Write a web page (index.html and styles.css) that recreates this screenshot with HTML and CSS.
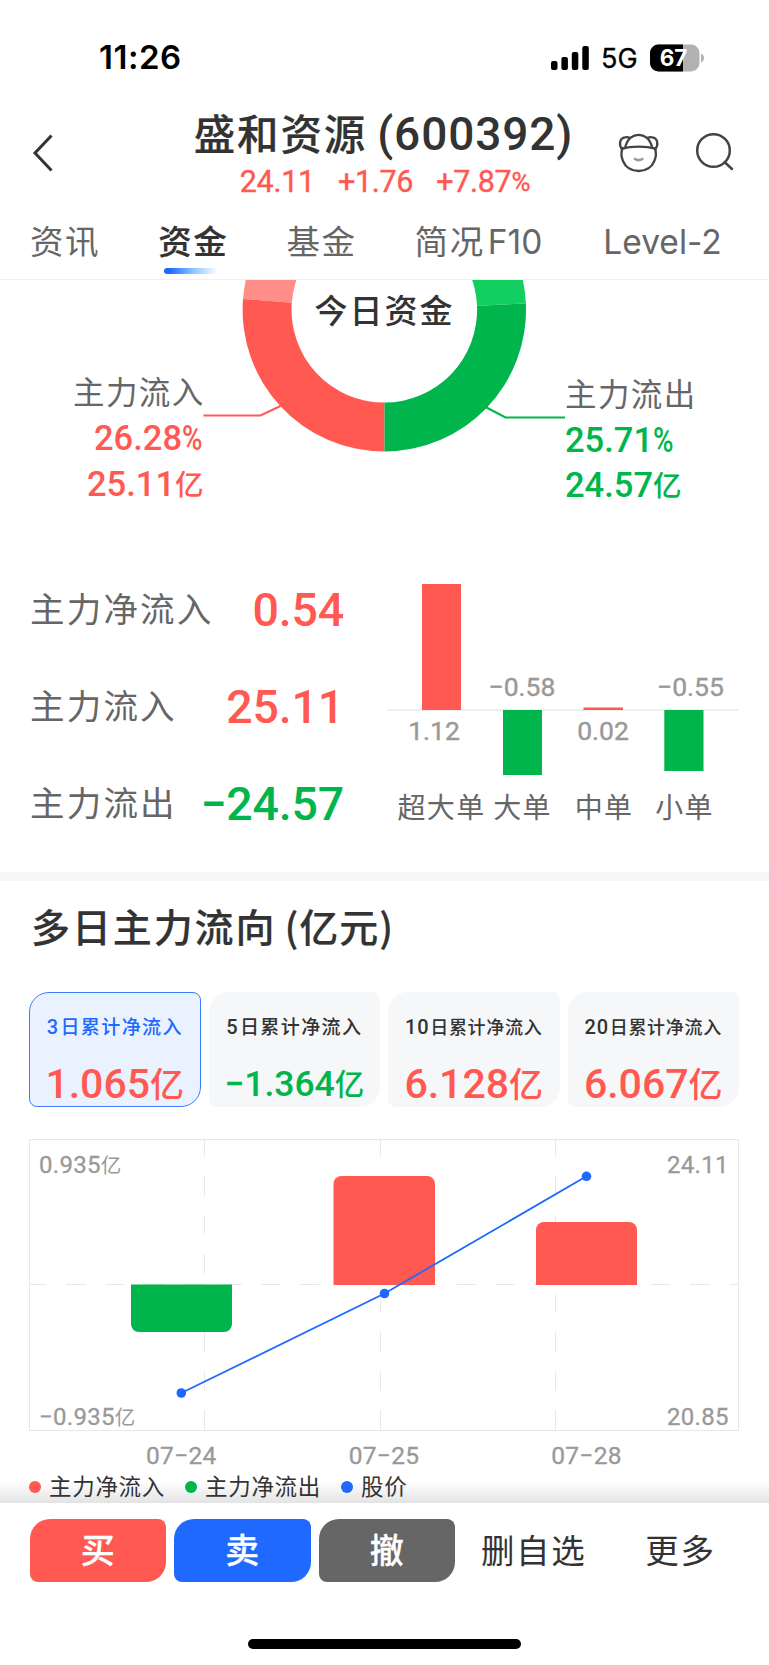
FILE: index.html
```html
<!DOCTYPE html>
<html lang="zh-CN">

<head>
    <meta charset="UTF-8">
    <meta name="viewport" content="width=device-width, initial-scale=1.0">
    <title>盛和资源 (600392)</title>
    <link rel="stylesheet" href="styles.css">
</head>

<body>

    <div class="phone">
        <!-- Status bar -->
        <div class="status-bar">
            <span class="time">11:26</span>
            <div class="status-right">
                <svg class="signal" width="38" height="24" viewBox="0 0 38 24">
                    <rect x="0" y="15" width="6.5" height="9" rx="2" />
                    <rect x="10.4" y="11" width="6.5" height="13" rx="2" />
                    <rect x="20.8" y="6" width="6.5" height="18" rx="2" />
                    <rect x="31.3" y="0" width="6.5" height="24" rx="2" />
                </svg>
                <span class="network">5G</span>
                <svg class="battery" width="54" height="28" viewBox="0 0 54 28">
                    <defs>
                        <clipPath id="cell"><rect x="0" y="0.5" width="49.5" height="27" rx="8.5" /></clipPath>
                    </defs>
                    <g clip-path="url(#cell)">
                        <rect width="50" height="28" fill="#b2b2b2" />
                        <rect width="33" height="28" fill="#000" />
                    </g>
                    <path d="M51 9.5c4 1.5 4 7.5 0 9z" fill="#b2b2b2" />
                    <text x="23.5" y="22" text-anchor="middle">67</text>
                </svg>
            </div>
        </div>

        <!-- Stock header -->
        <header class="header">
            <svg class="back" width="22" height="40" viewBox="0 0 22 40">
                <path d="M19.5 2.5 3 20l16.5 17.5" />
            </svg>
            <div class="stock">
                <h1>盛和资源<span class="code">(600392)</span></h1>
                <p class="quote"><span>24.11</span><span>+1.76</span><span>+7.87<small>%</small></span></p>
            </div>
            <div class="actions">
                <svg width="42" height="42" viewBox="700 336 126 126">
                    <path d="M713 384c-3 10-3 28 2 39 7 18 25 30 47 30s40-12 47-30c5-11 5-29 2-39" />
                    <path d="M711 386c30-8 72-8 102 0" />
                    <path d="M721 384c3-13 9-24 17-31 14-11 34-11 48 0 8 7 14 18 17 31" />
                    <path d="M713 388c-12-13-8-34 8-36 6-1 11 0 15 2" />
                    <path d="M811 388c12-13 8-34-8-36-6-1-11 0-15 2" />
                    <path class="smile" d="M751 417c6 4 16 4 22 0" />
                </svg>
                <svg width="40" height="40" viewBox="0 0 40 40">
                    <circle class="thin" cx="18.5" cy="18.5" r="16.3" />
                    <path class="thin" d="M29.5 30l7.5 7" />
                </svg>
            </div>
        </header>

        <nav class="tabs">
            <a>资讯</a>
            <a class="active">资金</a>
            <a>基金</a>
            <a>简况<span class="latin">F10</span></a>
            <a><span class="latin">Level-2</span></a>
        </nav>

        <main>
            <!-- Today's money flow ring -->
            <svg class="ring" width="769" height="242" viewBox="0 280 769 242">
                <path class="red-light" d="M243 299A141.7 141.7 0 0 1 384.3 168.1V217A92.8 92.8 0 0 0 291.8 302.7Z" />
                <path class="red" d="M384.5 451.5A141.7 141.7 0 0 1 243 299L291.8 302.7A92.8 92.8 0 0 0 384.5 402.6Z" />
                <path class="green-light" d="M525.9 303.5A141.7 141.7 0 0 0 384.3 168.1V217A92.8 92.8 0 0 1 477 305.7Z" />
                <path class="green" d="M384.5 451.5A141.7 141.7 0 0 0 525.9 303.5L477 305.7A92.8 92.8 0 0 1 384.5 402.6Z" />
                <text class="ring-title" x="314.5" y="323">今日资金</text>

                <path class="lead lead-in" d="M203.5 415.5h57l20-9.5" />
                <text class="ring-label" x="73" y="404">主力流入</text>
                <text class="ring-num in" x="94" y="450">26.28<tspan class="percent" textLength="20.5" lengthAdjust="spacingAndGlyphs">%</tspan></text>
                <text class="ring-num in" x="87" y="496">25.11<tspan class="yi" dy="-1">亿</tspan></text>

                <path class="lead lead-out" d="M565 417.5h-59.5l-19-10" />
                <text class="ring-label" x="565" y="406">主力流出</text>
                <text class="ring-num out" x="565" y="451.5">25.71<tspan class="percent" textLength="20.5" lengthAdjust="spacingAndGlyphs">%</tspan></text>
                <text class="ring-num out" x="565" y="497">24.57<tspan class="yi" dy="-1">亿</tspan></text>
            </svg>

            <section class="summary">
                <ul class="totals">
                    <li><span>主力净流入</span><b class="in">0.54</b></li>
                    <li><span>主力流入</span><b class="in">25.11</b></li>
                    <li><span>主力流出</span><b class="out">−24.57</b></li>
                </ul>
                <svg class="orders" width="382" height="310" viewBox="387 562 382 310">
                    <path d="M387 710h351.5" stroke="#eee" stroke-width="2" />
                    <rect class="red" x="422" y="584" width="39" height="126" />
                    <rect class="green" x="503" y="710" width="39" height="65" />
                    <rect class="red" x="583.5" y="707.5" width="39.5" height="2.5" />
                    <rect class="green" x="664.3" y="710" width="39.2" height="61" />
                    <text class="order-num" x="434" y="740">1.12</text>
                    <text class="order-num" x="522" y="696">−0.58</text>
                    <text class="order-num" x="603" y="740">0.02</text>
                    <text class="order-num" x="690.5" y="696">−0.55</text>
                    <text class="order-name" x="441.5" y="818">超大单</text>
                    <text class="order-name" x="522.5" y="818">大单</text>
                    <text class="order-name" x="604" y="818">中单</text>
                    <text class="order-name" x="684.5" y="818">小单</text>
                </svg>
            </section>

            <!-- Multi-day flow -->
            <section class="multi-day">
                <h2>多日主力流向<span class="unit">(亿元)</span></h2>
                <div class="cards">
                    <div class="card selected">
                        <p><i>3</i>日累计净流入</p>
                        <strong class="in">1.065<em>亿</em></strong>
                    </div>
                    <div class="card">
                        <p><i>5</i>日累计净流入</p>
                        <strong class="out small">−1.364<em>亿</em></strong>
                    </div>
                    <div class="card tight">
                        <p><i>10</i>日累计净流入</p>
                        <strong class="in">6.128<em>亿</em></strong>
                    </div>
                    <div class="card tight">
                        <p><i>20</i>日累计净流入</p>
                        <strong class="in">6.067<em>亿</em></strong>
                    </div>
                </div>

                <svg class="flow" width="769" height="342" viewBox="0 1130 769 342">
                    <path class="grid" d="M204.5 1139.5v291M380.5 1139.5v291M555.5 1139.5v291M29.5 1284.5h709" />
                    <rect class="frame" x="29.5" y="1139.5" width="709" height="291" />
                    <path class="green" d="M131 1284.5h101V1324a8 8 0 0 1-8 8h-85a8 8 0 0 1-8-8z" />
                    <path class="red" d="M333.5 1285v-101a8 8 0 0 1 8-8h85.5a8 8 0 0 1 8 8v101z" />
                    <path class="red" d="M536 1285v-55a8 8 0 0 1 8-8h85a8 8 0 0 1 8 8v55z" />
                    <polyline class="price" points="181.3,1393 384.5,1293.5 586.5,1176.3" />
                    <circle class="dot" cx="181.3" cy="1393" r="4.8" />
                    <circle class="dot" cx="384.5" cy="1293.5" r="4.8" />
                    <circle class="dot" cx="586.5" cy="1176.3" r="4.8" />
                    <text class="axis" x="39" y="1172.5">0.935<tspan class="yi">亿</tspan></text>
                    <text class="axis" x="39" y="1424.5">−0.935<tspan class="yi">亿</tspan></text>
                    <text class="axis" x="667" y="1172.5">24.11</text>
                    <text class="axis" x="667" y="1424.5">20.85</text>
                    <text class="date" x="181.3" y="1464">07−24</text>
                    <text class="date" x="384" y="1464">07−25</text>
                    <text class="date" x="586.5" y="1464">07−28</text>
                </svg>

                <div class="legend">
                    <span class="key key-in">主力净流入</span>
                    <span class="key key-out">主力净流出</span>
                    <span class="key key-price">股价</span>
                </div>
            </section>
        </main>

        <footer class="toolbar">
            <button class="buy">买</button>
            <button class="sell">卖</button>
            <button class="cancel">撤</button>
            <a class="remove">删自选</a>
            <a class="more">更多</a>
        </footer>
        <div class="home-indicator"></div>
    </div>

</body>

</html>
```
FILE: styles.css
```css
* {
    box-sizing: border-box;
    margin: 0;
    padding: 0;
}

body {
    font-family: "Noto Sans CJK SC", sans-serif;
    background-color: #ffffff;
    color: #333333;
}

.phone {
    width: 769px;
    height: 1665px;
    display: flex;
    flex-direction: column;
    overflow: hidden;
}

svg {
    display: block;
    flex: none;
}

.in {
    color: #ff5952;
    fill: #ff5952;
}

.out {
    color: #00b54b;
    fill: #00b54b;
}

.red {
    fill: #ff5952;
}

.red-light {
    fill: #ff8e88;
}

.green {
    fill: #00b54b;
}

.green-light {
    fill: #13cf61;
}

/* Status bar */
.status-bar {
    height: 102px;
    padding: 36px 65px 0 99px;
    display: flex;
    justify-content: space-between;
    align-items: flex-start;
    color: #000000;
    font-family: Inter, sans-serif;
}

.time {
    font-size: 33px;
    line-height: 43px;
    font-weight: 600;
    letter-spacing: 0.5px;
}

.status-right {
    display: flex;
    align-items: center;
    height: 43px;
}

.network {
    font-size: 27px;
    line-height: 43px;
    font-weight: 400;
    -webkit-text-stroke: 0.3px #000000;
    margin: 1px 0 0 12px;
    width: 49px;
}

.battery text {
    font-size: 22.5px;
    font-weight: 700;
    fill: #ffffff;
}

/* Header */
.header {
    height: 104px;
    display: grid;
    grid-template-columns: 170px 1fr 170px;
}

.back {
    margin: 31px 0 0 32px;
    fill: none;
    stroke: #333333;
    stroke-width: 3;
}

.stock {
    text-align: center;
    white-space: nowrap;
}

h1 {
    font-size: 41.5px;
    line-height: 60px;
    font-weight: 500;
    letter-spacing: 1.9px;
    margin-left: -2px;
    -webkit-text-stroke: 0.2px #333333;
}

.code {
    font-family: Roboto, sans-serif;
    font-size: 46px;
    letter-spacing: 0.9px;
    margin-left: 10px;
    -webkit-text-stroke: 0;
}

.quote {
    display: flex;
    justify-content: center;
    gap: 23px;
    margin-left: 1px;
    font-family: Roboto, sans-serif;
    font-size: 30.5px;
    line-height: 36px;
    letter-spacing: -0.3px;
    color: #ff5952;
    -webkit-text-stroke: 0.4px #ff5952;
}

.quote small {
    font-size: 26px;
    vertical-align: 1px;
    line-height: 1;
}

.actions {
    display: flex;
    align-items: flex-start;
    padding: 30px 0 0 19px;
    gap: 35px;
}

.actions path,
.actions circle {
    fill: none;
    stroke: #444444;
    stroke-width: 7;
    stroke-linecap: round;
}

.actions .thin {
    stroke-width: 2.5;
}

.actions .smile {
    stroke: #999999;
    stroke-width: 8;
}

/* Tabs */
.tabs {
    height: 74px;
    display: flex;
    padding: 10px 0 0 30px;
    border-bottom: 1px solid #f0f0f0;
    font-size: 33.5px;
    line-height: 47px;
    letter-spacing: 1.6px;
    color: #666666;
    white-space: nowrap;
}

.tabs a {
    margin-right: 58px;
}

.tabs .active {
    color: #333333;
    font-weight: 500;
    -webkit-text-stroke: 0.2px #333333;
}

.tabs .active::after {
    content: "";
    display: block;
    width: 54px;
    height: 6px;
    margin: 5px 0 0 6px;
    border-radius: 3px;
    background: linear-gradient(90deg, #1f69ff 10%, #8cc8ff 55%, #ffffff);
}

.latin {
    font-family: Inter, sans-serif;
    font-size: 33.5px;
    letter-spacing: 0;
    margin-left: 3px;
}

/* Ring chart */
.ring-title {
    font-size: 33px;
    font-weight: 500;
    letter-spacing: 2px;
    fill: #333333;
}

.ring-label {
    font-size: 31.5px;
    letter-spacing: 1.4px;
    fill: #666666;
}

.ring-num {
    font-family: Roboto, sans-serif;
    font-size: 34.5px;
    font-weight: 500;
}

.ring-num .yi {
    font-family: "Noto Sans CJK SC", sans-serif;
    font-size: 28.5px;
}

.lead {
    fill: none;
    stroke-width: 2;
}

.lead-in {
    stroke: #ff5952;
}

.lead-out {
    stroke: #00b54b;
}

/* Totals and order sizes */
.summary {
    height: 359px;
    padding-top: 40px;
    border-bottom: 9px solid #f6f7f9;
    display: flex;
    justify-content: space-between;
}

.totals {
    width: 344px;
    padding-left: 30px;
    list-style: none;
}

.totals li {
    display: flex;
    justify-content: space-between;
    height: 97px;
    line-height: 97px;
    font-size: 34.5px;
    letter-spacing: 2.2px;
    color: #666666;
    white-space: nowrap;
}

.totals span {
    line-height: 91px;
}

.totals b {
    font-family: Roboto, sans-serif;
    font-size: 46.5px;
    font-weight: 500;
    letter-spacing: -0.2px;
}

.order-num {
    font-family: Roboto, sans-serif;
    font-size: 26.5px;
    text-anchor: middle;
    fill: #999999;
    stroke: #999999;
    stroke-width: 0.4;
}

.order-name {
    font-size: 28px;
    letter-spacing: 1.3px;
    text-anchor: middle;
    fill: #666666;
}

/* Multi-day section */
h2 {
    padding: 14px 0 0 31px;
    font-size: 39px;
    line-height: 60px;
    font-weight: 500;
    letter-spacing: 1.9px;
    -webkit-text-stroke: 0.2px #333333;
}

.unit {
    margin-left: 8px;
    letter-spacing: 1px;
}

.cards {
    display: grid;
    grid-template-columns: repeat(4, 1fr);
    gap: 8px;
    padding: 0 30px 0 29px;
    margin-top: 37px;
}

.card {
    height: 115px;
    background: #f6f7f9;
    border: 1px solid #f6f7f9;
    border-radius: 20px 8px 20px 8px;
    text-align: center;
    white-space: nowrap;
    padding-top: 18px;
}

.card.selected {
    background: #ebf2ff;
    border-color: #3d7dff;
}

.card p {
    font-size: 19px;
    line-height: 30px;
    font-weight: 500;
    letter-spacing: 1.4px;
}

.card.tight p {
    font-size: 18px;
    letter-spacing: 0.7px;
}

.card.selected p {
    color: #1f69ff;
}

.card i {
    font-family: Roboto, sans-serif;
    font-style: normal;
    font-size: 20px;
    margin-right: 1px;
}

.card strong {
    display: block;
    margin-top: 17px;
    font-family: Roboto, sans-serif;
    font-size: 41px;
    line-height: 50px;
    font-weight: 500;
}

.card strong.small {
    font-size: 35.5px;
}

.card em {
    font-family: "Noto Sans CJK SC", sans-serif;
    font-style: normal;
    font-size: 0.83em;
    line-height: 1;
    vertical-align: 1px;
}

.flow {
    margin-top: 23px;
}

.grid,
.frame {
    fill: none;
    stroke: #e8e8e8;
    stroke-width: 1;
}

.grid {
    stroke-dasharray: 19.5 19.5;
    stroke-dashoffset: 2.3;
}

.price {
    fill: none;
    stroke: #1f69ff;
    stroke-width: 1.8;
}

.dot {
    fill: #1f69ff;
}

.axis,
.date {
    font-family: Roboto, sans-serif;
    font-size: 24px;
    letter-spacing: 0.3px;
    fill: #999999;
    stroke: #999999;
    stroke-width: 0.3;
}

.axis .yi {
    font-family: "Noto Sans CJK SC", sans-serif;
    font-size: 20.5px;
    stroke: none;
}

.date {
    font-size: 24.5px;
    text-anchor: middle;
}

.legend {
    height: 31px;
    display: flex;
    align-items: flex-start;
    padding-left: 29px;
    background: linear-gradient(#ffffff 30%, #e3e3e3);
    font-size: 22.5px;
    line-height: 27px;
    letter-spacing: 0.7px;
    white-space: nowrap;
}

.key {
    display: flex;
    align-items: center;
    margin-right: 20px;
}

.key::before {
    content: "";
    width: 12px;
    height: 12px;
    margin: 2px 8px 0 0;
    border-radius: 50%;
}

.key-in::before {
    background: #ff5952;
}

.key-out::before {
    background: #00b54b;
}

.key-price::before {
    background: #1f69ff;
}

/* Bottom toolbar */
.toolbar {
    display: flex;
    align-items: center;
    gap: 8px;
    height: 95px;
    padding-left: 29.5px;
    font-size: 33.5px;
    line-height: 60px;
    letter-spacing: 1.6px;
    white-space: nowrap;
}

.toolbar a {
    padding-bottom: 3px;
}

.toolbar button {
    width: 136.5px;
    height: 63px;
    border: none;
    border-radius: 20px 8px 20px 8px;
    color: #ffffff;
    font-family: inherit;
    font-size: 34px;
    font-weight: 500;
    line-height: 58px;
    padding-bottom: 3px;
    -webkit-text-stroke: 0.3px #ffffff;
}

.buy {
    background: #ff5952;
}

.sell {
    background: #1f69ff;
}

.cancel {
    background: #666666;
}

.remove {
    margin-left: 18px;
}

.more {
    margin-left: 51px;
}

.home-indicator {
    width: 273.5px;
    height: 10px;
    margin: 41px 0 0 247.5px;
    border-radius: 5px;
    background: #000000;
}
```
